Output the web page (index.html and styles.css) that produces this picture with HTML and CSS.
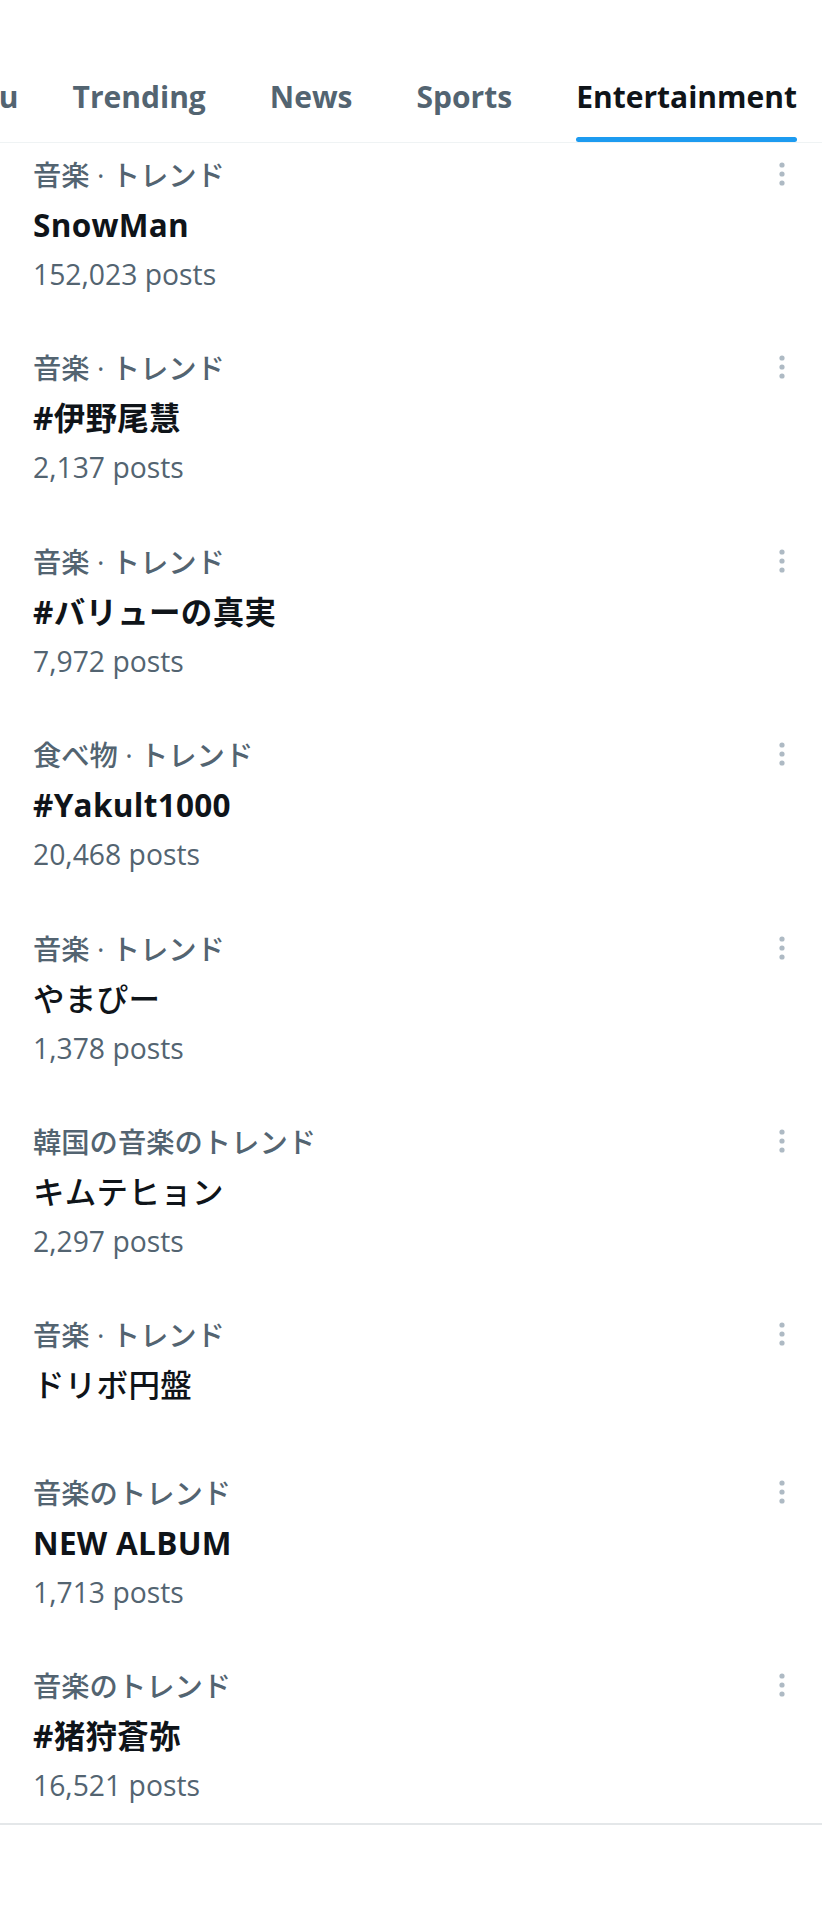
FILE: index.html
```html
<!DOCTYPE html>
<html lang="ja">
<head>
<meta charset="utf-8">
<title>Explore - Entertainment</title>
<link rel="stylesheet" href="styles.css">
</head>
<body>
<nav class="tabs">
  <div class="tab tab-scrolled"><span class="tab-label">For you</span></div>
  <div class="tab"><span class="tab-label">Trending</span></div>
  <div class="tab"><span class="tab-label">News</span></div>
  <div class="tab"><span class="tab-label">Sports</span></div>
  <div class="tab active"><span class="tab-label">Entertainment</span></div>
</nav>
<main class="trends">
  <div class="trend">
    <div class="trend-text">
      <div class="cat">音楽 · トレンド</div>
      <div class="title">SnowMan</div>
      <div class="posts">152,023 posts</div>
    </div>
    <svg class="more" viewBox="0 0 20 38"><circle cx="10" cy="9" r="2.6"/><circle cx="10" cy="18" r="2.6"/><circle cx="10" cy="27" r="2.6"/></svg>
  </div>
  <div class="trend">
    <div class="trend-text">
      <div class="cat">音楽 · トレンド</div>
      <div class="title">#伊野尾慧</div>
      <div class="posts">2,137 posts</div>
    </div>
    <svg class="more" viewBox="0 0 20 38"><circle cx="10" cy="9" r="2.6"/><circle cx="10" cy="18" r="2.6"/><circle cx="10" cy="27" r="2.6"/></svg>
  </div>
  <div class="trend">
    <div class="trend-text">
      <div class="cat">音楽 · トレンド</div>
      <div class="title">#バリューの真実</div>
      <div class="posts">7,972 posts</div>
    </div>
    <svg class="more" viewBox="0 0 20 38"><circle cx="10" cy="9" r="2.6"/><circle cx="10" cy="18" r="2.6"/><circle cx="10" cy="27" r="2.6"/></svg>
  </div>
  <div class="trend">
    <div class="trend-text">
      <div class="cat">食べ物 · トレンド</div>
      <div class="title">#Yakult1000</div>
      <div class="posts">20,468 posts</div>
    </div>
    <svg class="more" viewBox="0 0 20 38"><circle cx="10" cy="9" r="2.6"/><circle cx="10" cy="18" r="2.6"/><circle cx="10" cy="27" r="2.6"/></svg>
  </div>
  <div class="trend">
    <div class="trend-text">
      <div class="cat">音楽 · トレンド</div>
      <div class="title kana">やまぴー</div>
      <div class="posts">1,378 posts</div>
    </div>
    <svg class="more" viewBox="0 0 20 38"><circle cx="10" cy="9" r="2.6"/><circle cx="10" cy="18" r="2.6"/><circle cx="10" cy="27" r="2.6"/></svg>
  </div>
  <div class="trend">
    <div class="trend-text">
      <div class="cat">韓国の音楽のトレンド</div>
      <div class="title kana">キムテヒョン</div>
      <div class="posts">2,297 posts</div>
    </div>
    <svg class="more" viewBox="0 0 20 38"><circle cx="10" cy="9" r="2.6"/><circle cx="10" cy="18" r="2.6"/><circle cx="10" cy="27" r="2.6"/></svg>
  </div>
  <div class="trend">
    <div class="trend-text">
      <div class="cat">音楽 · トレンド</div>
      <div class="title kana">ドリボ円盤</div>
    </div>
    <svg class="more" viewBox="0 0 20 38"><circle cx="10" cy="9" r="2.6"/><circle cx="10" cy="18" r="2.6"/><circle cx="10" cy="27" r="2.6"/></svg>
  </div>
  <div class="trend">
    <div class="trend-text">
      <div class="cat">音楽のトレンド</div>
      <div class="title">NEW ALBUM</div>
      <div class="posts">1,713 posts</div>
    </div>
    <svg class="more" viewBox="0 0 20 38"><circle cx="10" cy="9" r="2.6"/><circle cx="10" cy="18" r="2.6"/><circle cx="10" cy="27" r="2.6"/></svg>
  </div>
  <div class="trend">
    <div class="trend-text">
      <div class="cat">音楽のトレンド</div>
      <div class="title">#猪狩蒼弥</div>
      <div class="posts">16,521 posts</div>
    </div>
    <svg class="more" viewBox="0 0 20 38"><circle cx="10" cy="9" r="2.6"/><circle cx="10" cy="18" r="2.6"/><circle cx="10" cy="27" r="2.6"/></svg>
  </div>
</main>
</body>
</html>
```
FILE: styles.css
```css
html, body {
  margin: 0;
  padding: 0;
  background: #ffffff;
}

body {
  font-family: "Open Sans", "Noto Sans CJK JP", sans-serif;
  color: #0f1419;
  width: 822px;
  overflow: hidden;
}

.tabs {
  display: flex;
  justify-content: flex-end;
  gap: 64px;
  padding-right: 25px;
  border-bottom: 1px solid #eff3f4;
  overflow: hidden;
}

.tab {
  flex: none;
  display: flex;
  flex-direction: column;
  padding-top: 77px;
}

.tab-scrolled {
  margin-right: -10px;
}

.tab-label {
  font-size: 30px;
  line-height: 40px;
  font-weight: 700;
  color: #536471;
  white-space: nowrap;
}

.tab::after {
  content: "";
  display: block;
  height: 5px;
  margin-top: 20px;
  border-radius: 3px;
  background: transparent;
}

.tab.active .tab-label {
  color: #0f1419;
}

.tab.active::after {
  background: #1d9bf0;
}

.trends {
  display: flex;
  flex-direction: column;
  gap: 24.4px;
  border-bottom: 2px solid #e4e7e9;
}

.trend {
  display: flex;
  align-items: flex-start;
  padding: 13px 30px 20px 33px;
}

.trend-text {
  flex: 1;
  display: flex;
  flex-direction: column;
}

.cat {
  font-size: 28.3px;
  line-height: 38px;
  font-weight: 500;
  color: #536471;
}

.title {
  font-size: 31.5px;
  line-height: 62px;
  font-weight: 700;
  color: #0f1419;
  letter-spacing: 0.3px;
}

.title.kana {
  font-weight: 500;
}

.posts {
  font-size: 28.3px;
  line-height: 36px;
  color: #536471;
}

.more {
  flex: none;
  width: 20px;
  height: 38px;
  fill: #aebac4;
}
```
